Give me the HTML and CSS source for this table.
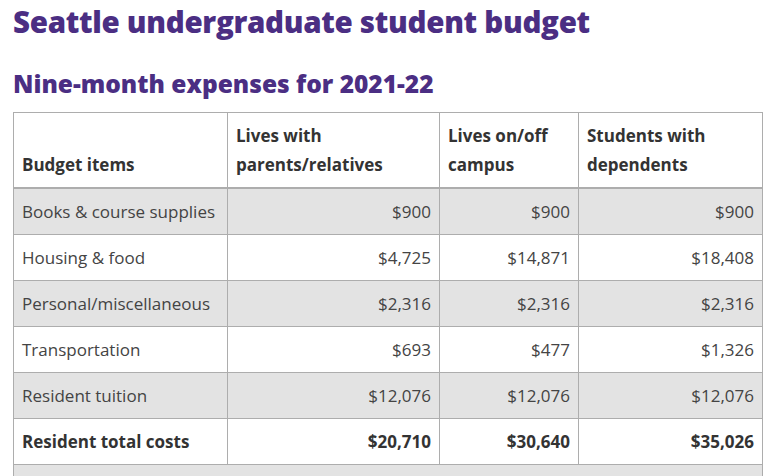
FILE: index.html
```html
<!DOCTYPE html>
<html lang="en">
<head>
<meta charset="utf-8">
<title>Seattle undergraduate student budget</title>
<link rel="stylesheet" href="styles.css">
</head>
<body>
<main class="page">
  <h1 class="title">Seattle undergraduate student budget</h1>
  <h2 class="subtitle">Nine-month expenses for 2021-22</h2>
  <table class="budget">
    <colgroup>
      <col class="c1"><col class="c2"><col class="c3"><col class="c4">
    </colgroup>
    <thead>
      <tr>
        <th>Budget items</th>
        <th>Lives with parents/relatives</th>
        <th>Lives on/off campus</th>
        <th>Students with dependents</th>
      </tr>
    </thead>
    <tbody>
      <tr class="alt"><td>Books &amp; course supplies</td><td class="num">$900</td><td class="num">$900</td><td class="num">$900</td></tr>
      <tr><td>Housing &amp; food</td><td class="num">$4,725</td><td class="num">$14,871</td><td class="num">$18,408</td></tr>
      <tr class="alt"><td>Personal/miscellaneous</td><td class="num">$2,316</td><td class="num">$2,316</td><td class="num">$2,316</td></tr>
      <tr><td>Transportation</td><td class="num">$693</td><td class="num">$477</td><td class="num">$1,326</td></tr>
      <tr class="alt"><td>Resident tuition</td><td class="num">$12,076</td><td class="num">$12,076</td><td class="num">$12,076</td></tr>
      <tr class="total"><td>Resident total costs</td><td class="num">$20,710</td><td class="num">$30,640</td><td class="num">$35,026</td></tr>
      <tr class="alt"><td class="note" colspan="4">&nbsp;</td></tr>
    </tbody>
  </table>
</main>
</body>
</html>
```
FILE: styles.css
```css
html, body {
  margin: 0;
  padding: 0;
  background: #ffffff;
}
.page {
  padding: 0 17px 0 13px;
  font-family: "Open Sans", "Liberation Sans", sans-serif;
  color: #333333;
}
.title {
  margin: 4px 0 0;
  font-family: "Open Sans", sans-serif;
  font-weight: 800;
  font-size: 29.5px;
  line-height: 36px;
  color: #4b2e83;
  letter-spacing: -0.3px;
}
.subtitle {
  margin: 29px 0 13px;
  font-family: "Open Sans", sans-serif;
  font-weight: 800;
  font-size: 24.5px;
  line-height: 30px;
  color: #4b2e83;
  letter-spacing: 0;
}
.budget {
  width: 749px;
  border-collapse: collapse;
  table-layout: fixed;
  font-size: 17px;
  line-height: 29px;
}
.c1 { width: 214px; }
.c2 { width: 212px; }
.c3 { width: 139px; }
.c4 { width: 184px; }
.budget th,
.budget td {
  border: 1px solid #adadad;
  padding: 8px 8px;
}
.budget th {
  text-align: left;
  vertical-align: bottom;
  font-weight: 700;
  color: #333333;
  border-bottom: 2px solid #adadad;
}
.budget td {
  color: #444444;
}
.alt td {
  background: #e3e3e3;
}
.num {
  text-align: right;
}
.total td {
  font-weight: 700;
  color: #333333;
}
```
